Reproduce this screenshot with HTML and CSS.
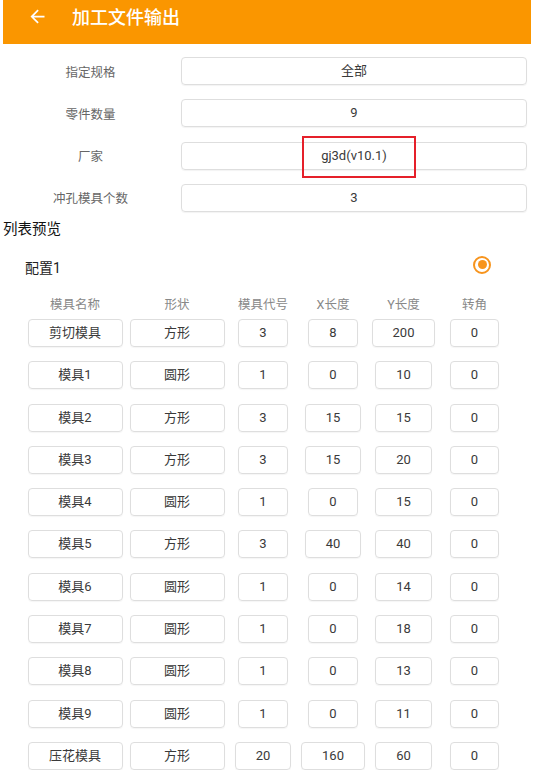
FILE: index.html
```html
<!DOCTYPE html>
<html>
<head>
    <title>加工文件输出</title>
    <link rel="stylesheet" href="styles.css">
</head>
<body>
    <header class="toolbar">
        <svg class="back" viewBox="0 0 24 24" width="21" height="21">
            <path d="M20 11H7.83l5.59-5.59L12 4l-8 8 8 8 1.41-1.41L7.83 13H20v-2z" fill="#fff"/>
        </svg>
        <h1 class="title">加工文件输出</h1>
    </header>

    <section class="form">
        <div class="form-row">
            <span class="form-label">指定规格</span>
            <div class="field">全部</div>
        </div>
        <div class="form-row">
            <span class="form-label">零件数量</span>
            <div class="field">9</div>
        </div>
        <div class="form-row">
            <span class="form-label">厂家</span>
            <div class="field field-marked">gj3d(v10.1)<span class="mark"></span></div>
        </div>
        <div class="form-row">
            <span class="form-label">冲孔模具个数</span>
            <div class="field">3</div>
        </div>
    </section>

    <div class="section-title">列表预览</div>

    <div class="config-row">
        <span class="config-name">配置1</span>
        <span class="radio"></span>
    </div>

    <div class="mold-grid mold-head">
        <span>模具名称</span>
        <span>形状</span>
        <span>模具代号</span>
        <span>X长度</span>
        <span>Y长度</span>
        <span>转角</span>
    </div>

    <div class="mold-grid mold-rows">
        <div class="cell wide">剪切模具</div><div class="cell wide">方形</div><div class="cell">3</div><div class="cell">8</div><div class="cell">200</div><div class="cell">0</div>
        <div class="cell wide">模具1</div><div class="cell wide">圆形</div><div class="cell">1</div><div class="cell">0</div><div class="cell">10</div><div class="cell">0</div>
        <div class="cell wide">模具2</div><div class="cell wide">方形</div><div class="cell">3</div><div class="cell">15</div><div class="cell">15</div><div class="cell">0</div>
        <div class="cell wide">模具3</div><div class="cell wide">方形</div><div class="cell">3</div><div class="cell">15</div><div class="cell">20</div><div class="cell">0</div>
        <div class="cell wide">模具4</div><div class="cell wide">圆形</div><div class="cell">1</div><div class="cell">0</div><div class="cell">15</div><div class="cell">0</div>
        <div class="cell wide">模具5</div><div class="cell wide">方形</div><div class="cell">3</div><div class="cell">40</div><div class="cell">40</div><div class="cell">0</div>
        <div class="cell wide">模具6</div><div class="cell wide">圆形</div><div class="cell">1</div><div class="cell">0</div><div class="cell">14</div><div class="cell">0</div>
        <div class="cell wide">模具7</div><div class="cell wide">圆形</div><div class="cell">1</div><div class="cell">0</div><div class="cell">18</div><div class="cell">0</div>
        <div class="cell wide">模具8</div><div class="cell wide">圆形</div><div class="cell">1</div><div class="cell">0</div><div class="cell">13</div><div class="cell">0</div>
        <div class="cell wide">模具9</div><div class="cell wide">圆形</div><div class="cell">1</div><div class="cell">0</div><div class="cell">11</div><div class="cell">0</div>
        <div class="cell wide">压花模具</div><div class="cell wide">方形</div><div class="cell">20</div><div class="cell">160</div><div class="cell">60</div><div class="cell">0</div>
    </div>
</body>
</html>
```

FILE: styles.css
```css
body {
    margin: 0;
    font-family: Roboto, "Noto Sans CJK SC", sans-serif;
    background: #fff;
    color: #333;
}

/* top bar */
.toolbar {
    height: 44px;
    margin: 0 20px 0 3px;
    background: #fa9600;
    display: flex;
    align-items: flex-start;
    padding-top: 6px;
    box-sizing: border-box;
}
.back {
    margin-left: 24px;
    display: block;
}
.title {
    margin: 0 0 0 24px;
    font-size: 18px;
    font-weight: 500;
    line-height: 23px;
    color: #fff;
}

/* settings form */
.form {
    display: flex;
    flex-direction: column;
    gap: 14.33px;
    padding: 13px 24px 0 0;
}
.form-row {
    display: flex;
    align-items: center;
}
.form-label {
    width: 181px;
    text-align: center;
    font-size: 12.5px;
    color: #666;
}
.field {
    flex: 1;
    height: 28px;
    line-height: 26px;
    box-sizing: border-box;
    border: 1px solid #dedede;
    border-radius: 4px;
    box-shadow: 0 1px 1px rgba(0, 0, 0, 0.05);
    text-align: center;
    font-size: 13px;
    color: #3a3a3a;
}
.field-marked {
    position: relative;
}
.mark {
    position: absolute;
    left: 120px;
    top: -7px;
    width: 114px;
    height: 42px;
    border: 2px solid #e5202a;
    box-sizing: border-box;
}

.section-title {
    margin: 8px 0 0 3px;
    font-size: 14.5px;
    line-height: 20px;
    color: #111;
}

.config-row {
    display: flex;
    justify-content: space-between;
    align-items: center;
    height: 24px;
    margin: 14px 60px 0 25px;
    font-size: 14px;
    color: #222;
}
.config-name {
    padding-top: 2px;
}
.radio {
    width: 18px;
    height: 18px;
    box-sizing: border-box;
    border: 2px solid #f7941d;
    border-radius: 50%;
    display: flex;
    align-items: center;
    justify-content: center;
    margin-top: -2px;
}
.radio::after {
    content: "";
    width: 9px;
    height: 9px;
    border-radius: 50%;
    background: #f7941d;
}

/* mold table */
.mold-grid {
    display: grid;
    grid-template-columns: 102px 102px 70px 70px 71px 71px;
    justify-items: center;
    padding-left: 24px;
}
.mold-head {
    margin-top: 19px;
    font-size: 12.5px;
    line-height: 16px;
    color: #888;
}
.mold-rows {
    margin-top: 6px;
    row-gap: 14.3px;
}
.cell {
    height: 28px;
    line-height: 26px;
    min-width: 48px;
    padding: 0 20px;
    box-sizing: border-box;
    border: 1px solid #dedede;
    border-radius: 4px;
    box-shadow: 0 1px 1px rgba(0, 0, 0, 0.04);
    text-align: center;
    font-size: 13px;
    color: #3a3a3a;
}
.cell.wide {
    width: 95px;
    padding: 0;
}
```
